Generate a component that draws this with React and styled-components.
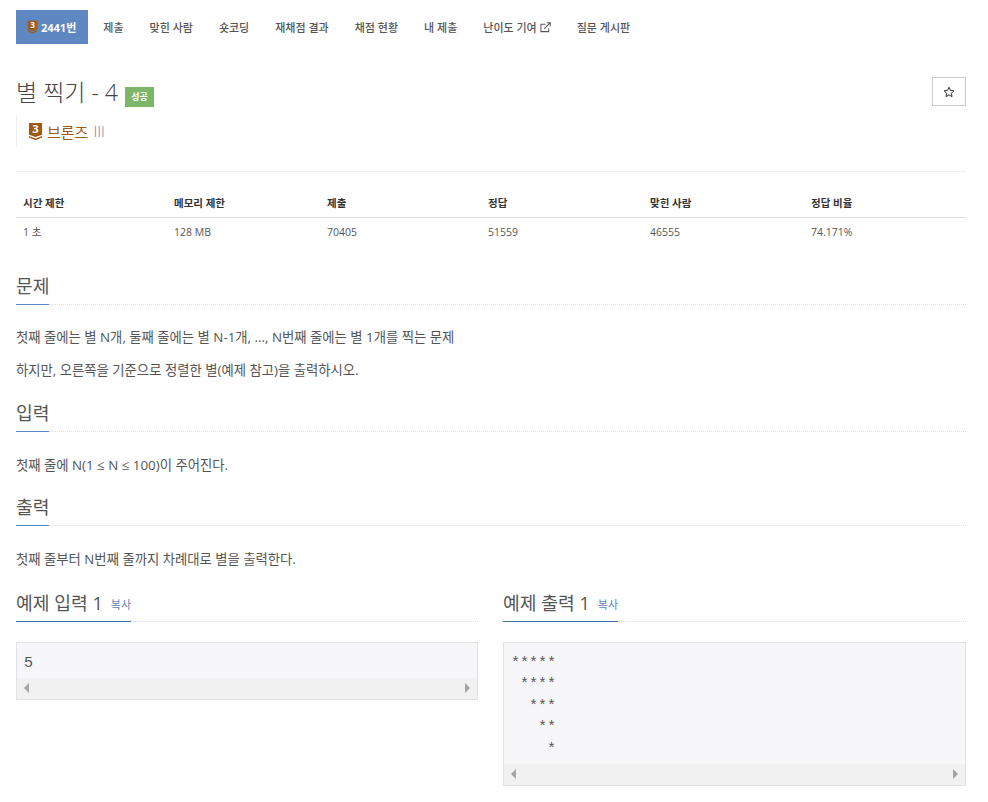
import React from "react";
import styled, { createGlobalStyle } from "styled-components";

const Global = createGlobalStyle`
  html, body { margin: 0; padding: 0; background: #fff; }
  body {
    font-family: "Open Sans", "Noto Sans CJK KR", sans-serif;
    color: #555;
    font-size: 12px;
  }
`;

const Page = styled.div`
  width: 950px;
  height: 802px;
  overflow: hidden;
  padding: 10px 22px 0 16px;
`;

const Tabs = styled.ul`
  display: flex;
  list-style: none;
  margin: 0;
  padding: 0;
`;

const Tab = styled.li`
  height: 34px;
  padding: ${(p) => (p.$active ? "0 12px 0 11px" : "0 13px")};
  margin-right: ${(p) => (p.$active ? "2px" : "0")};
  display: flex;
  align-items: center;
  gap: 3px;
  font-size: 11px;
  font-weight: ${(p) => (p.$active ? 700 : 500)};
  white-space: nowrap;
  background: ${(p) => (p.$active ? "#5f87c2" : "transparent")};
  color: ${(p) => (p.$active ? "#fff" : "#555")};
`;

const TitleRow = styled.div`
  display: flex;
  justify-content: space-between;
  align-items: flex-start;
  margin-top: 33px;
`;

const TitleText = styled.h1`
  margin: 0;
  display: flex;
  align-items: flex-end;
  height: 30px;
  font-size: 23px;
  line-height: 30px;
  font-weight: 300;
  color: #444;
`;

const Result = styled.span`
  background: #7cb668;
  color: #fff;
  font-size: 9px;
  font-weight: 700;
  width: 29px;
  height: 20px;
  line-height: 20px;
  text-align: center;
  margin-left: 7px;
`;

const StarButton = styled.button`
  width: 34px;
  height: 29px;
  padding: 0;
  background: #fff;
  border: 1px solid #ccc;
  display: flex;
  align-items: center;
  justify-content: center;
`;

const Tier = styled.div`
  display: flex;
  align-items: center;
  gap: 4px;
  height: 32px;
  margin-top: 8px;
  padding-left: 11px;
  border-left: 1px solid #eee;
  font-size: 15px;
  color: #9a5a1c;
`;

const TierRank = styled.span`
  color: #6f78a8;
  margin-left: 1px;
  font-weight: 300;
`;

const Rule = styled.hr`
  border: 0;
  border-top: 1px solid #eee;
  margin: 24px 0 0;
`;

const Table = styled.div`
  display: grid;
  grid-template-columns: 151px 153px 161px 162px 161px 1fr;
  margin-top: 19px;
`;

const HeadCell = styled.div`
  height: 26px;
  padding-left: 7px;
  border-bottom: 1px solid #ddd;
  font-size: 10.5px;
  font-weight: 700;
  color: #333;
  line-height: 25px;
`;

const Cell = styled.div`
  height: 29px;
  padding-left: 7px;
  font-size: 10.5px;
  line-height: 29px;
  color: #555;
`;

const SectionHead = styled.div`
  border-bottom: 1px dotted #ddd;
  margin-top: ${(p) => p.$top}px;
`;

const SectionTitle = styled.h2`
  display: inline-block;
  margin: 0 0 -1px;
  height: 32px;
  line-height: 28px;
  font-size: 18.2px;
  font-weight: 400;
  color: #555;
  border-bottom: 1px solid ${(p) => p.$line || "#5f87c2"};
`;

const Paragraph = styled.p`
  margin: ${(p) => p.$top}px 0 0;
  line-height: 20px;
  font-size: 13.35px;
  color: #555;
`;

const Samples = styled.div`
  display: grid;
  grid-template-columns: 462px 463px;
  column-gap: 25px;
  margin-top: 20px;
`;

const Copy = styled.a`
  font-size: 11px;
  color: #5f7fb8;
  margin-left: 8px;
  vertical-align: 1px;
`;

const Box = styled.div`
  margin-top: 20px;
  border: 1px solid #e1e1e8;
  background: #f7f7f9;
`;

const Code = styled.pre`
  margin: 0;
  padding: 9.5px 7px 3.5px;
  font-family: "Liberation Mono", monospace;
  font-size: 15px;
  line-height: 21.6px;
  color: #555;
`;

const Scrollbar = styled.div`
  height: 21px;
  background: #f1f1f1;
  display: flex;
  justify-content: space-between;
  align-items: center;
  padding: 0 7px;
`;

const Arrow = styled.span`
  width: 0;
  height: 0;
  border-top: 5px solid transparent;
  border-bottom: 5px solid transparent;
  ${(p) =>
    p.$right ? "border-left: 5px solid #a3a3a3;" : "border-right: 5px solid #a3a3a3;"}
`;

const Badge = ({ size = 14 }) => (
  <svg width={size} height={size * 1.25} viewBox="0 0 16 20">
    <path d="M1 1h14v12.5l-7 2.5-7-2.5z" fill="#a05a14" />
    <path d="M1 15l7 2.6 7-2.6v1.6l-7 2.8-7-2.8z" fill="#a05a14" />
    <text x="8" y="12" textAnchor="middle" fontSize="12" fontWeight="700" fill="#fff" fontFamily="Open Sans">
      3
    </text>
  </svg>
);

const ExternalLink = () => (
  <svg width="11" height="11" viewBox="0 0 12 12" fill="none" stroke="#555" strokeWidth="1.1">
    <path d="M9.5 7v3.5h-8.5V2.5h5" />
    <path d="M4.5 7.5L11 1M7.5 .8h3.7v3.7" />
  </svg>
);

const StarIcon = () => (
  <svg width="12" height="12" viewBox="0 0 24 24" fill="none" stroke="#333" strokeWidth="2">
    <path d="M12 2.5l2.9 6.4 6.9.8-5.1 4.7 1.4 6.9-6.1-3.5-6.1 3.5 1.4-6.9L2.2 9.7l6.9-.8z" />
  </svg>
);

const navItems = ["제출", "맞힌 사람", "숏코딩", "재채점 결과", "채점 현황", "내 제출"];
const heads = ["시간 제한", "메모리 제한", "제출", "정답", "맞힌 사람", "정답 비율"];
const values = ["1 초", "128 MB", "70405", "51559", "46555", "74.171%"];

export default function App() {
  return (
    <Page>
      <Global />
      <Tabs>
        <Tab $active>
          <Badge size={11} />
          2441번
        </Tab>
        {navItems.map((item) => (
          <Tab key={item}>{item}</Tab>
        ))}
        <Tab>
          난이도 기여
          <ExternalLink />
        </Tab>
        <Tab>질문 게시판</Tab>
      </Tabs>

      <TitleRow>
        <TitleText>
          별 찍기 - 4<Result>성공</Result>
        </TitleText>
        <StarButton aria-label="star">
          <StarIcon />
        </StarButton>
      </TitleRow>
      <Tier>
        <Badge size={15} />
        브론즈<TierRank>III</TierRank>
      </Tier>
      <Rule />

      <Table>
        {heads.map((h) => (
          <HeadCell key={h}>{h}</HeadCell>
        ))}
        {values.map((v) => (
          <Cell key={v}>{v}</Cell>
        ))}
      </Table>

      <SectionHead $top={25}>
        <SectionTitle>문제</SectionTitle>
      </SectionHead>
      <Paragraph $top={22}>
        첫째 줄에는 별 N개, 둘째 줄에는 별 N-1개, ..., N번째 줄에는 별 1개를 찍는 문제
      </Paragraph>
      <Paragraph $top={13}>하지만, 오른쪽을 기준으로 정렬한 별(예제 참고)을 출력하시오.</Paragraph>

      <SectionHead $top={19}>
        <SectionTitle>입력</SectionTitle>
      </SectionHead>
      <Paragraph $top={23}>첫째 줄에 N(1 ≤ N ≤ 100)이 주어진다.</Paragraph>

      <SectionHead $top={18}>
        <SectionTitle>출력</SectionTitle>
      </SectionHead>
      <Paragraph $top={23}>첫째 줄부터 N번째 줄까지 차례대로 별을 출력한다.</Paragraph>

      <Samples>
        <div>
          <SectionHead $top={0}>
            <SectionTitle $line="#4a6ea9">
              예제 입력 1<Copy>복사</Copy>
            </SectionTitle>
          </SectionHead>
          <Box>
            <Code>5</Code>
            <Scrollbar>
              <Arrow />
              <Arrow $right />
            </Scrollbar>
          </Box>
        </div>
        <div>
          <SectionHead $top={0}>
            <SectionTitle $line="#4a6ea9">
              예제 출력 1<Copy>복사</Copy>
            </SectionTitle>
          </SectionHead>
          <Box>
            <Code>{"*****\n ****\n  ***\n   **\n    *"}</Code>
            <Scrollbar>
              <Arrow />
              <Arrow $right />
            </Scrollbar>
          </Box>
        </div>
      </Samples>
    </Page>
  );
}
